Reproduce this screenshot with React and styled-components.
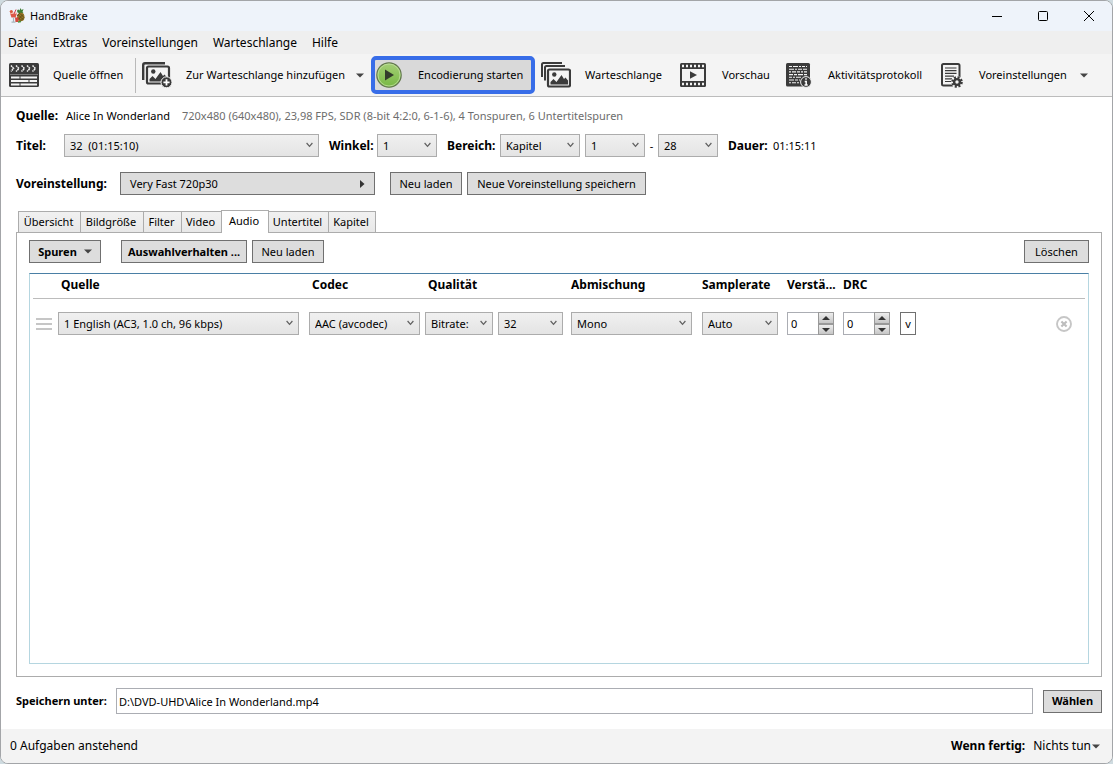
import React from 'react';
import styled, { createGlobalStyle, css } from 'styled-components';

const GlobalStyle = createGlobalStyle`
  *, *::before, *::after { box-sizing: border-box; }
  body {
    margin: 0;
    background: #cfdbe0;
    color: #000;
    font: 11px/16px "Noto Sans", "Open Sans", sans-serif;
  }
  button, input, select { margin: 0; font: inherit; color: inherit; }
`;

/* ---------- window frame ---------- */

const Window = styled.div`
  display: flex;
  flex-direction: column;
  min-height: 100vh;
  overflow: hidden;
  background: #fff;
  border: 1px solid #a3a5a8;
  border-radius: 8px;
`;

const TitleBar = styled.header`
  display: flex;
  align-items: center;
  height: 30px;
  padding: 0 0 0 8px;
  background: #eef3fa;
`;

const WindowTitle = styled.h1`
  flex: 1;
  margin: 0 0 0 5px;
  font-size: 11px;
  font-weight: 400;
`;

const CaptionButton = styled.button`
  display: grid;
  place-items: center;
  width: 46px;
  height: 28px;
  padding: 0;
  border: 0;
  background: none;
`;

const MenuBar = styled.nav`
  display: flex;
  align-items: center;
  gap: 15px;
  height: 23px;
  padding: 0 7px;
  background: #efefef;
`;

const MenuLink = styled.a`
  color: inherit;
  font-size: 12px;
  text-decoration: none;
`;

const Toolbar = styled.div`
  display: flex;
  align-items: center;
  height: 43px;
  padding-left: 8px;
  background: #f4f4f4;
  border-bottom: 1px solid #bcbcbc;
`;

const ToolButton = styled.button`
  display: flex;
  align-items: center;
  flex: none;
  gap: ${(p) => p.$gap || 14}px;
  width: ${(p) => p.$width}px;
  height: 38px;
  padding: 0;
  border: 0;
  background: none;
  white-space: nowrap;
  svg { flex: none; }
  ${(p) =>
    p.$primary &&
    css`
      padding-left: 1px;
      background: #d9d9d9;
      border: 4px solid #386de8;
      border-radius: 5px;
    `}
`;

const ToolLabel = styled.span`
  margin-right: ${(p) => (p.$menu ? '-3px' : '0')};
`;

const Separator = styled.span`
  flex: none;
  width: 1px;
  height: 35px;
  margin-right: 6px;
  background: #b9b9b9;
`;

/* ---------- shared controls ---------- */

const Button = styled.button`
  display: inline-flex;
  align-items: center;
  justify-content: ${(p) => (p.$spread ? 'space-between' : 'center')};
  flex: none;
  gap: 7px;
  width: ${(p) => p.$width}px;
  height: 23px;
  padding: 0 ${(p) => (p.$spread ? 9 : 0)}px;
  background: #ddd;
  border: 1px solid #707070;
  font-weight: ${(p) => (p.$bold ? 700 : 400)};
  white-space: nowrap;
`;

const SelectBox = styled.span`
  display: inline-grid;
  align-items: center;
  flex: none;
  width: ${(p) => p.$width}px;
  height: 23px;
  vertical-align: top;
  > * { grid-area: 1 / 1; }
  svg {
    justify-self: end;
    margin: 0 6px 2px 0;
    pointer-events: none;
  }
`;

const SelectField = styled.select`
  appearance: none;
  width: 100%;
  height: 23px;
  padding: 0 18px 0 5px;
  background: linear-gradient(#f0f0f0, #e4e4e4);
  border: 1px solid #acacac;
  border-radius: 0;
`;

const Chevron = () => (
  <svg width="7" height="6" viewBox="0 0 7 6" aria-hidden="true">
    <path d="M.6 1 3.500 4.400 6.400 1" fill="none" stroke="#606060" strokeWidth="1.200" />
  </svg>
);

const Select = ({ value, width, ...rest }) => (
  <SelectBox $width={width}>
    <SelectField {...rest}>
      <option>{value}</option>
    </SelectField>
    <Chevron />
  </SelectBox>
);

const DownArrow = () => (
  <svg width="8" height="5" viewBox="0 0 8 5" aria-hidden="true">
    <path d="M0 .5h8L4 4.500z" fill="#444" />
  </svg>
);

const SpinBox = styled.span`
  display: grid;
  grid-template-columns: 31px 16px;
  grid-template-rows: 12px 11px;
  width: 47px;
`;

const SpinInput = styled.input`
  grid-row: 1 / 3;
  width: 31px;
  padding: 0 3px;
  background: #fff;
  border: 1px solid #abadb3;
  border-right: 0;
  appearance: textfield;
  &::-webkit-inner-spin-button { appearance: none; margin: 0; }
`;

const SpinButton = styled.button`
  display: grid;
  place-items: center;
  padding: 0;
  background: linear-gradient(#ededed, #c6c6c6);
  border: 1px solid #999;
`;

const Spinner = ({ label }) => (
  <SpinBox>
    <SpinInput type="number" defaultValue="0" aria-label={label} />
    <SpinButton aria-label={`${label} erhöhen`}>
      <svg width="8" height="4" viewBox="0 0 8 4"><path d="M0 4h8L4 0z" fill="#333" /></svg>
    </SpinButton>
    <SpinButton aria-label={`${label} verringern`}>
      <svg width="8" height="4" viewBox="0 0 8 4"><path d="M0 0h8L4 4z" fill="#333" /></svg>
    </SpinButton>
  </SpinBox>
);

/* ---------- source and preset rows ---------- */

const Main = styled.main`
  display: flex;
  flex-direction: column;
  flex: 1;
  padding: 10px 10px 15px 15px;
`;

const Row = styled.div`
  display: flex;
  align-items: center;
  flex: none;
  height: 23px;
  margin-bottom: ${(p) => p.$after || 0}px;
`;

const FieldLabel = styled.label`
  flex: none;
  width: ${(p) => p.$width}px;
  font-size: 12px;
  font-weight: 700;
  white-space: nowrap;
`;

const SourceRow = styled.div`
  display: flex;
  align-items: center;
  height: 18px;
  margin-bottom: 9px;
`;

const SourceInfo = styled.span`
  margin-left: 12px;
  color: #6d6d6d;
`;

const Space = styled.span`
  flex: none;
  width: ${(p) => p.$width}px;
  text-align: center;
`;

/* ---------- tabs ---------- */

const TabList = styled.div`
  display: flex;
  align-items: flex-end;
  height: 23px;
  margin: 0 0 -1px 2px;
`;

const Tab = styled.button`
  flex: none;
  width: ${(p) => p.$width}px;
  height: 21px;
  margin: 0 -1px 1px 0;
  padding: 0 2px 0 0;
  background: linear-gradient(#f1f1f1, #e8e8e8);
  border: 1px solid #acacac;
  border-bottom: 0;
  ${(p) =>
    p.$active &&
    css`
      z-index: 1;
      height: 23px;
      margin-bottom: 0;
      padding-bottom: 2px;
      background: #fff;
    `}
`;

const TabPanel = styled.section`
  display: flex;
  flex-direction: column;
  flex: 1;
  padding: 7px 12px 12px;
  border: 1px solid #acacac;
`;

/* ---------- track list ---------- */

const TrackList = styled.div`
  flex: 1;
  padding: 0 3px;
  border: 1px solid #b5d6e0;
  border-top-color: #4a7fa5;
`;

const TrackTable = styled.table`
  width: 100%;
  table-layout: fixed;
  border-collapse: collapse;
`;

const Col = styled.col`
  width: ${(p) => (p.$width ? `${p.$width}px` : 'auto')};
`;

const Th = styled.th`
  height: 24px;
  padding: 0 0 1px ${(p) => p.$indent || 0}px;
  border-bottom: 1px solid #bcbcbc;
  font-size: 12px;
  line-height: 16px;
  text-align: left;
  white-space: nowrap;
`;

const Td = styled.td`
  height: 51px;
  padding: 0 0 0 ${(p) => p.$indent || 0}px;
  > svg { display: block; }
`;

const Pair = styled.div`
  display: flex;
  gap: 5px;
`;

const ExpandButton = styled.button`
  display: block;
  width: 16px;
  height: 23px;
  padding: 0;
  background: #fff;
  border: 1px solid #707070;
`;

const RemoveButton = styled.button`
  display: block;
  padding: 0;
  border: 0;
  background: none;
  svg { display: block; }
`;

/* ---------- destination and status bar ---------- */

const PathInput = styled.input`
  flex: 1;
  min-width: 0;
  height: 26px;
  margin-right: 10px;
  padding: 0 2px;
  border: 1px solid #abadb3;
`;

const DestinationLabel = styled.label`
  flex: none;
  width: 100px;
  font-weight: 700;
`;

const DestinationRow = styled.div`
  display: flex;
  align-items: center;
  flex: none;
  height: 26px;
  margin-top: 11px;
`;

const StatusBar = styled.footer`
  display: flex;
  align-items: center;
  height: 34px;
  padding: 0 12px 0 9px;
  background: #f3f3f3;
  font-size: 12px;
`;

const StatusText = styled.span`
  flex: 1;
`;

const WhenDone = styled.button`
  display: flex;
  align-items: center;
  gap: 1px;
  margin-left: 8px;
  padding: 0;
  border: 0;
  background: none;
`;

/* ---------- icons ---------- */

const AppIcon = () => (
  <svg width="16" height="16" viewBox="0 0 16 16" aria-hidden="true">
    <path d="M8.500 4.500c-1-2 0-3 1-3l1 1 1-2.500 1 2 2-1-1 3 1 1-2 1z" fill="#3f7d35" />
    <ellipse cx="11.800" cy="9" rx="3.700" ry="4.300" fill="#9a7425" />
    <path d="M9 6.500l5 5M9 9.500l3 3M11 5.500l4 4M14 6.500l-5 5M11 5l-3 3M15 9.500l-3 3" stroke="#4f4a1c" strokeWidth=".8" />
    <path d="M1 5h7L6.600 9.500H2.400z" fill="#dd5848" />
    <path d="M1 4.500h7l-.5 1.500h-6z" fill="#f2b9a8" />
    <path d="M4.500 9.500v4M2.500 14.200h4" stroke="#a9b6bc" strokeWidth="1.200" />
    <path d="M5 6 7 1.500" stroke="#cf3b4b" strokeWidth="1" />
    <circle cx="2.300" cy="3.500" r="1.600" fill="#d8583c" />
    <path d="M6 9.500h3.500v4.500H6.500z" fill="#d4473c" />
    <path d="M9 14l3-.5" stroke="#4e9240" strokeWidth="1.500" />
  </svg>
);

const ClapperIcon = () => (
  <svg width="30" height="24" viewBox="0 0 30 24" aria-hidden="true">
    <rect width="30" height="24" rx="1.500" fill="#3b3b3b" />
    <g fill="none" stroke="#f4f4f4">
      <path d="M2 2.500 4.500 5.500 2 8.500M7 2.500l3 3-3 3M12.500 2.500l3 3-3 3M18 2.500l3 3-3 3M23.500 2.500l3 3-3 3" strokeWidth="1.500" strokeDasharray="1.800 .6" />
      <path d="M1 11.500h28" strokeWidth="1" strokeOpacity=".35" />
      <path d="M2 14.500h8.500M11.500 14.500h16.500M2 18h17.500M20.500 18h7.500M2 21.500h8.500M11.500 21.500h16.500" strokeWidth="2" />
    </g>
  </svg>
);

const Photo = ({ x, y }) => (
  <g transform={`translate(${x} ${y})`}>
    <rect x="1" y="1" width="22" height="17" rx="1.500" fill="#f4f4f4" stroke="#3b3b3b" strokeWidth="2.200" />
    <circle cx="7.300" cy="6" r="2.200" fill="#3b3b3b" />
    <path d="M3.500 16v-2.500l3-3 3 3 5-7 2.500 4 1.500-1.500 2.500 3V16z" fill="#3b3b3b" />
  </g>
);

const AddQueueIcon = () => (
  <svg width="30" height="26" viewBox="0 0 30 26" aria-hidden="true">
    <path d="M1.200 18V3Q1.200 1.200 3 1.200h20" fill="none" stroke="#3b3b3b" strokeWidth="2.400" />
    <Photo x={4} y={3.5} />
    <circle cx="24.500" cy="20.300" r="5.500" fill="#3b3b3b" stroke="#f4f4f4" strokeWidth="1" />
    <path d="M24.500 17.200v6.200M21.400 20.300h6.200" stroke="#fff" strokeWidth="1.800" />
  </svg>
);

const QueueIcon = () => (
  <svg width="30" height="26" viewBox="0 0 30 26" aria-hidden="true">
    <path d="M1 15V2.500Q1 1 2.500 1H21M4 18.500V5.500Q4 4 5.500 4H24" fill="none" stroke="#3b3b3b" strokeWidth="2" />
    <Photo x={6} y={6.5} />
  </svg>
);

const PlayIcon = () => (
  <svg width="26" height="26" viewBox="0 0 26 26" aria-hidden="true">
    <defs>
      <linearGradient id="play" x2="0" y2="1">
        <stop stopColor="#a5cf77" />
        <stop offset="1" stopColor="#77b843" />
      </linearGradient>
    </defs>
    <circle cx="13" cy="13" r="12.200" fill="url(#play)" stroke="#63774f" strokeWidth="1.200" />
    <circle cx="13" cy="13" r="11" fill="none" stroke="#c1dfa0" strokeWidth=".8" />
    <path d="M9 7.500v11l9-5.500z" fill="#333c2b" />
  </svg>
);

const PreviewIcon = () => (
  <svg width="26" height="24" viewBox="0 0 26 24" aria-hidden="true">
    <rect width="26" height="24" rx="1.500" fill="#3b3b3b" />
    <path d="M2 3h22M2 21h22" stroke="#f4f4f4" strokeWidth="2.400" strokeDasharray="2 2" />
    <path d="M2 6h22v12H2z" fill="#f4f4f4" />
    <path d="M10 8.200v7.600l7-3.800z" fill="#3b3b3b" />
  </svg>
);

const ActivityIcon = () => (
  <svg width="26" height="25" viewBox="0 0 26 25" aria-hidden="true">
    <rect width="24" height="23.500" rx="1.500" fill="#3b3b3b" />
    <g stroke="#f4f4f4" strokeWidth="1.100">
      <path d="M3 3.500h18" strokeDasharray="3 1 5 1 2 1" />
      <path d="M3 6.200h18" strokeDasharray="5 1 2 1 4 1" />
      <path d="M3 8.900h18" strokeDasharray="2 1 4 1 3 1" />
      <path d="M3 11.600h18" strokeDasharray="4 1 3 1 5 1" />
      <path d="M3 14.300h12" strokeDasharray="3 1 2 1 5 1" />
      <path d="M3 17h11" strokeDasharray="5 1 3 1" />
      <path d="M3 19.700h11" strokeDasharray="2 1 4 1" />
    </g>
    <circle cx="20" cy="19" r="5.400" fill="#3b3b3b" stroke="#f4f4f4" />
    <path d="M20 15.200v1.600M18.700 18.400h1.500v3.200M18.500 22h3.200" stroke="#fff" strokeWidth="1.500" fill="none" />
  </svg>
);

const PreferencesIcon = () => (
  <svg width="22" height="25" viewBox="0 0 22 25" aria-hidden="true">
    <rect x="1" y="1" width="17.500" height="21.500" rx="1.500" fill="#f4f4f4" stroke="#3b3b3b" strokeWidth="2" />
    <path d="M4 5h11.500M4 7.700h11.500M4 10.400h11.500M4 13.100h9M4 15.800h7M4 18.500h6" stroke="#3b3b3b" strokeWidth="1.200" />
    <circle cx="16" cy="19" r="6" fill="#f4f4f4" />
    <circle cx="16" cy="19" r="4.600" fill="none" stroke="#3b3b3b" strokeWidth="2.400" strokeDasharray="2 1.613" />
    <circle cx="16" cy="19" r="2.900" fill="#f4f4f4" stroke="#3b3b3b" strokeWidth="2.400" />
  </svg>
);

const DragHandle = () => (
  <svg width="16" height="12" viewBox="0 0 16 12" aria-hidden="true">
    <path d="M0 1h16M0 6h16M0 11h16" stroke="#c6c6c6" strokeWidth="1.800" />
  </svg>
);

const RemoveIcon = () => (
  <svg width="16" height="16" viewBox="0 0 16 16" aria-hidden="true">
    <circle cx="8" cy="8" r="7" fill="none" stroke="#c6c6c6" strokeWidth="1.900" />
    <path d="M5.400 5.400l5.200 5.200M10.600 5.400l-5.200 5.200" stroke="#bdbdbd" strokeWidth="2.100" />
  </svg>
);

/* ---------- page ---------- */

const menus = ['Datei', 'Extras', 'Voreinstellungen', 'Warteschlange', 'Hilfe'];

const tabs = [
  { name: 'Übersicht', width: 63 },
  { name: 'Bildgröße', width: 64 },
  { name: 'Filter', width: 39 },
  { name: 'Video', width: 41 },
  { name: 'Audio', width: 48, active: true },
  { name: 'Untertitel', width: 61 },
  { name: 'Kapitel', width: 48 },
];

const columns = [
  { name: '', width: 25 },
  { name: 'Quelle', width: 251, indent: 3 },
  { name: 'Codec', width: 116, indent: 3 },
  { name: 'Qualität', width: 146, indent: 3 },
  { name: 'Abmischung', width: 131 },
  { name: 'Samplerate', width: 85 },
  { name: 'Verstä...', width: 56 },
  { name: 'DRC', width: 57 },
  { name: '' },
  { name: '', width: 29 },
];

export default function App() {
  return (
    <>
      <GlobalStyle />
      <Window>
        <TitleBar>
          <AppIcon />
          <WindowTitle>HandBrake</WindowTitle>
          <CaptionButton aria-label="Minimieren">
            <svg width="10" height="10" viewBox="0 0 10 10"><path d="M0 5.500h10" stroke="#000" /></svg>
          </CaptionButton>
          <CaptionButton aria-label="Maximieren">
            <svg width="10" height="10" viewBox="0 0 10 10"><rect x=".5" y=".5" width="9" height="9" rx="1" fill="none" stroke="#000" /></svg>
          </CaptionButton>
          <CaptionButton aria-label="Schließen">
            <svg width="10" height="10" viewBox="0 0 10 10"><path d="M0 0l10 10M10 0L0 10" stroke="#000" /></svg>
          </CaptionButton>
        </TitleBar>

        <MenuBar>
          {menus.map((name) => (
            <MenuLink key={name} href="#">{name}</MenuLink>
          ))}
        </MenuBar>

        <Toolbar>
          <ToolButton $width={126}><ClapperIcon /><ToolLabel>Quelle öffnen</ToolLabel></ToolButton>
          <Separator />
          <ToolButton $width={229}>
            <AddQueueIcon />
            <ToolLabel $menu>Zur Warteschlange hinzufügen</ToolLabel>
            <DownArrow />
          </ToolButton>
          <ToolButton $primary $gap={16} $width={164}><PlayIcon /><ToolLabel>Encodierung starten</ToolLabel></ToolButton>
          <Space $width={6} />
          <ToolButton $width={139}><QueueIcon /><ToolLabel>Warteschlange</ToolLabel></ToolButton>
          <ToolButton $gap={16} $width={106}><PreviewIcon /><ToolLabel>Vorschau</ToolLabel></ToolButton>
          <ToolButton $gap={16} $width={155}><ActivityIcon /><ToolLabel>Aktivitätsprotokoll</ToolLabel></ToolButton>
          <ToolButton $gap={16} $width={160}>
            <PreferencesIcon />
            <ToolLabel $menu>Voreinstellungen</ToolLabel>
            <DownArrow />
          </ToolButton>
        </Toolbar>

        <Main>
          <SourceRow>
            <FieldLabel as="span" $width={50}>Quelle:</FieldLabel>
            <span>Alice In Wonderland</span>
            <SourceInfo>720x480 (640x480), 23,98 FPS, SDR (8-bit 4:2:0, 6-1-6), 4 Tonspuren, 6 Untertitelspuren</SourceInfo>
          </SourceRow>

          <Row $after={15}>
            <FieldLabel htmlFor="title" $width={48}>Titel:</FieldLabel>
            <Select id="title" width={255} value={'32\u00a0 (01:15:10)'} />
            <Space $width={10} />
            <FieldLabel htmlFor="angle" $width={48}>Winkel:</FieldLabel>
            <Select id="angle" width={60} value="1" />
            <Space $width={10} />
            <FieldLabel htmlFor="range" $width={53}>Bereich:</FieldLabel>
            <Select id="range" width={80} value="Kapitel" />
            <Space $width={5} />
            <Select aria-label="Von" width={60} value="1" />
            <Space $width={13}>-</Space>
            <Select aria-label="Bis" width={60} value="28" />
            <Space $width={10} />
            <FieldLabel as="span" $width={45}>Dauer:</FieldLabel>
            <span>01:15:11</span>
          </Row>

          <Row $after={15}>
            <FieldLabel htmlFor="preset" $width={104}>Voreinstellung:</FieldLabel>
            <Button id="preset" $spread $width={255}>
              Very Fast 720p30
              <svg width="5" height="8" viewBox="0 0 5 8"><path d="M0 0v8l4.500-4z" fill="#333" /></svg>
            </Button>
            <Space $width={15} />
            <Button $width={72}>Neu laden</Button>
            <Space $width={5} />
            <Button $width={179}>Neue Voreinstellung speichern</Button>
          </Row>

          <TabList role="tablist">
            {tabs.map((t) => (
              <Tab key={t.name} role="tab" aria-selected={!!t.active} $active={t.active} $width={t.width}>
                {t.name}
              </Tab>
            ))}
          </TabList>

          <TabPanel role="tabpanel">
            <Row $after={10}>
              <Button $bold $width={72}>Spuren<DownArrow /></Button>
              <Space $width={20} />
              <Button $bold $width={126}>Auswahlverhalten ...</Button>
              <Space $width={5} />
              <Button $width={72}>Neu laden</Button>
              <StatusText />
              <Button $width={65}>Löschen</Button>
            </Row>

            <TrackList>
              <TrackTable>
                <colgroup>
                  {columns.map((c, i) => <Col key={i} $width={c.width} />)}
                </colgroup>
                <thead>
                  <tr>{columns.map((c, i) => <Th key={i} $indent={c.indent}>{c.name}</Th>)}</tr>
                </thead>
                <tbody>
                  <tr>
                    <Td $indent={3}><DragHandle /></Td>
                    <Td><Select aria-label="Quelle" width={241} value="1 English (AC3, 1.0 ch, 96 kbps)" /></Td>
                    <Td><Select aria-label="Codec" width={111} value="AAC (avcodec)" /></Td>
                    <Td>
                      <Pair>
                        <Select aria-label="Qualität" width={68} value="Bitrate:" />
                        <Select aria-label="Bitrate" width={65} value="32" />
                      </Pair>
                    </Td>
                    <Td><Select aria-label="Abmischung" width={121} value="Mono" /></Td>
                    <Td><Select aria-label="Samplerate" width={76} value="Auto" /></Td>
                    <Td><Spinner label="Verstärkung" /></Td>
                    <Td><Spinner label="DRC" /></Td>
                    <Td><ExpandButton aria-label="Erweitert">v</ExpandButton></Td>
                    <Td><RemoveButton aria-label="Spur entfernen"><RemoveIcon /></RemoveButton></Td>
                  </tr>
                </tbody>
              </TrackTable>
            </TrackList>
          </TabPanel>

          <DestinationRow>
            <DestinationLabel htmlFor="destination">Speichern unter:</DestinationLabel>
            <PathInput id="destination" type="text" defaultValue="D:\DVD-UHD\Alice In Wonderland.mp4" />
            <Button $bold $width={59}>Wählen</Button>
          </DestinationRow>
        </Main>

        <StatusBar>
          <StatusText>0 Aufgaben anstehend</StatusText>
          <strong>Wenn fertig:</strong>
          <WhenDone>Nichts tun<DownArrow /></WhenDone>
        </StatusBar>
      </Window>
    </>
  );
}
